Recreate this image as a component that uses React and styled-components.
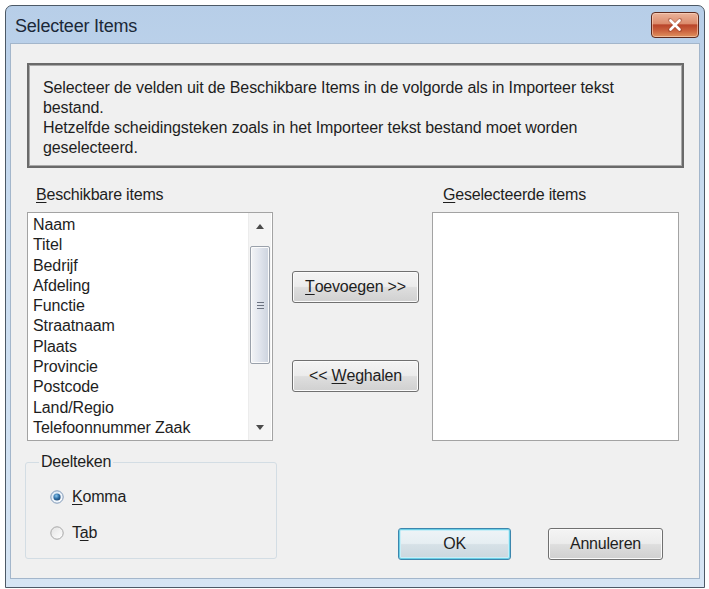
import React from 'react';
import styled, { createGlobalStyle } from 'styled-components';

const GlobalStyle = createGlobalStyle`
  html, body {
    margin: 0;
    padding: 0;
    background: #ffffff;
  }

  body {
    font-family: "Liberation Sans", Arial, sans-serif;
    color: #1e1e1e;
  }
`;

const AVAILABLE_ITEMS = [
    'Naam',
    'Titel',
    'Bedrijf',
    'Afdeling',
    'Functie',
    'Straatnaam',
    'Plaats',
    'Provincie',
    'Postcode',
    'Land/Regio',
    'Telefoonnummer Zaak',
];

const Window = styled.div`
  margin: 5px 0 0 5px;
  width: 700px;
  height: 583px;
  box-sizing: border-box;
  border: 1px solid #4c5966;
  border-radius: 7px 7px 0 0;
  background: linear-gradient(180deg, #b7cee8 0%, #c9dcf0 35%, #d6e5f4 100%);
  padding: 0 4px 8px 4px;
  display: flex;
  flex-direction: column;
`;

const TitleBar = styled.div`
  height: 37px;
  display: flex;
  align-items: center;
  padding-left: 5px;
  padding-right: 1px;
  flex-shrink: 0;
`;

const TitleText = styled.span`
  padding-top: 4px;
  font-size: 18px;
  color: #1b2838;
  letter-spacing: -0.2px;
`;

const CloseButton = styled.div`
  margin-left: auto;
  width: 48px;
  height: 26px;
  box-sizing: border-box;
  border: 1px solid #5e2b1f;
  border-radius: 4px;
  background: linear-gradient(
    180deg,
    #eab39b 0%,
    #dc8c6d 44%,
    #b9452a 50%,
    #cc6440 75%,
    #e0925f 100%
  );
  box-shadow: inset 0 0 0 1px rgba(255, 220, 200, 0.55);
  display: flex;
  align-items: center;
  justify-content: center;
`;

const Client = styled.div`
  flex: 1;
  background: #f0f0f0;
  border: 1px solid #a3b6cb;
  padding: 19px 15px 0 16px;
  display: flex;
  flex-direction: column;
`;

const DescBox = styled.div`
  height: 105px;
  box-sizing: border-box;
  border: 2px solid #6a6a6a;
  box-shadow: inset 0 0 0 1px #a9a9a9;
  padding: 13px 10px 0 14px;
  font-size: 16px;
  line-height: 20px;
  letter-spacing: -0.1px;
`;

const MainRow = styled.div`
  display: flex;
  margin-top: 17px;
`;

const ListColumn = styled.div`
  width: ${(props) => props.$width}px;
  margin-left: ${(props) => props.$offset || 0}px;
  display: flex;
  flex-direction: column;
`;

const FieldLabel = styled.div`
  font-size: 16px;
  line-height: 20px;
  padding-left: ${(props) => props.$indent}px;
  margin-bottom: 7px;
  letter-spacing: -0.2px;
`;

const Mnemonic = styled.span`
  text-decoration: underline;
  text-underline-offset: 2px;
`;

const ListBox = styled.div`
  height: 229px;
  box-sizing: border-box;
  border: 1px solid #a3a3a3;
  background: #ffffff;
  display: flex;
`;

const ItemList = styled.div`
  flex: 1;
  padding: 2px 0 0 5px;
  overflow: hidden;
`;

const Item = styled.div`
  font-size: 16px;
  line-height: 20.3px;
  white-space: nowrap;
  letter-spacing: -0.1px;
`;

const ScrollBar = styled.div`
  width: 22px;
  margin-right: 1px;
  background: #f4f4f4;
  border-left: 1px solid #ececec;
  display: flex;
  flex-direction: column;
`;

const ScrollArrow = styled.div`
  height: 26px;
  display: flex;
  align-items: center;
  justify-content: center;
  flex-shrink: 0;
`;

const ScrollTrack = styled.div`
  flex: 1;
  padding: 0 1px;
`;

const ScrollThumb = styled.div`
  height: 118px;
  box-sizing: border-box;
  border: 1px solid #9aa1ab;
  border-radius: 2px;
  background: linear-gradient(90deg, #f3f4f6 0%, #e2e6ee 45%, #ccd3de 100%);
  box-shadow: inset 0 0 0 1px #fbfbfb;
  display: flex;
  flex-direction: column;
  align-items: center;
  justify-content: center;
  gap: 2px;
`;

const GripLine = styled.div`
  width: 7px;
  height: 1px;
  background: #6b7280;
`;

const MoveColumn = styled.div`
  width: 127px;
  margin-left: 19px;
  padding-top: 86px;
  display: flex;
  flex-direction: column;
  gap: 57px;
`;

const PushButton = styled.div`
  width: ${(props) => props.$width}px;
  height: 32px;
  box-sizing: border-box;
  border: 1px solid ${(props) => (props.$default ? '#3c86ad' : '#707070')};
  border-radius: 3px;
  background: ${(props) =>
    props.$default
      ? 'linear-gradient(180deg, #eef4f7 0%, #e6eef2 48%, #d6e1e7 52%, #cbd7de 100%)'
      : 'linear-gradient(180deg, #f4f4f4 0%, #ececec 48%, #dedede 52%, #d0d0d0 100%)'};
  box-shadow: ${(props) =>
    props.$default ? 'inset 0 0 0 1px #6ccfe6, inset 0 0 0 2px #c9eef7' : 'inset 0 0 0 1px #fbfbfb'};
  display: flex;
  align-items: center;
  justify-content: center;
  font-size: 16px;
  letter-spacing: -0.2px;
  color: #1e1e1e;
`;

const BottomRow = styled.div`
  display: flex;
  align-items: flex-end;
  margin-top: 11px;
  margin-left: -2px;
`;

const GroupBox = styled.fieldset`
  width: 252px;
  height: 107px;
  box-sizing: border-box;
  margin: 0;
  padding: 0 0 0 13px;
  border: 1px solid #d3dde4;
  border-radius: 3px;
  min-inline-size: 0;
`;

const GroupLegend = styled.legend`
  padding: 0 2px;
  font-size: 16px;
  line-height: 20px;
  letter-spacing: -0.2px;
`;

const RadioList = styled.div`
  display: flex;
  flex-direction: column;
  gap: 16px;
  padding: 15px 0 0 11px;
`;

const RadioRow = styled.div`
  display: flex;
  align-items: center;
  gap: 8px;
  height: 20px;
  font-size: 16px;
  letter-spacing: -0.2px;
`;

const DialogButtons = styled.div`
  margin-left: auto;
  margin-right: 21px;
  margin-bottom: -1px;
  display: flex;
  gap: 37px;
`;

const CloseGlyph = () => (
    <svg width="16" height="14" viewBox="0 0 16 14" aria-hidden="true">
        <path d="M3 2 L13 12 M13 2 L3 12" stroke="#7a2a18" strokeWidth="4" strokeLinecap="round" opacity="0.35" />
        <path d="M3.5 2.5 L12.5 11.5 M12.5 2.5 L3.5 11.5" stroke="#ffffff" strokeWidth="2.6" strokeLinecap="round" />
    </svg>
);

const Arrow = ({ up }) => (
    <svg width="8" height="5" viewBox="0 0 8 5" aria-hidden="true">
        <path d={up ? 'M0 5 L4 0 L8 5 Z' : 'M0 0 L4 5 L8 0 Z'} fill="#4a4a4a" />
    </svg>
);

const RadioMark = ({ checked }) => (
    <svg width="14" height="14" viewBox="0 0 14 14" aria-hidden="true">
        <defs>
            <linearGradient id={checked ? 'rOn' : 'rOff'} x1="0" y1="0" x2="1" y2="1">
                <stop offset="0" stopColor={checked ? '#d7e6f5' : '#e2e2e2'} />
                <stop offset="1" stopColor="#ffffff" />
            </linearGradient>
            <radialGradient id="rDot" cx="0.4" cy="0.35" r="0.7">
                <stop offset="0" stopColor="#8cc8f0" />
                <stop offset="0.55" stopColor="#2f6fa6" />
                <stop offset="1" stopColor="#1b4470" />
            </radialGradient>
        </defs>
        <circle cx="7" cy="7" r="6.2" fill={`url(#${checked ? 'rOn' : 'rOff'})`} stroke={checked ? '#7f99b8' : '#a6a6a6'} strokeWidth="1" />
        {checked && <circle cx="7" cy="7" r="3.6" fill="url(#rDot)" />}
    </svg>
);

const AvailableList = () => (
    <ListBox>
        <ItemList>
            {AVAILABLE_ITEMS.map((item) => (
                <Item key={item}>{item}</Item>
            ))}
        </ItemList>
        <ScrollBar>
            <ScrollArrow>
                <Arrow up />
            </ScrollArrow>
            <ScrollTrack>
                <ScrollThumb style={{ marginTop: 7 }}>
                    <GripLine />
                    <GripLine />
                    <GripLine />
                </ScrollThumb>
            </ScrollTrack>
            <ScrollArrow>
                <Arrow />
            </ScrollArrow>
        </ScrollBar>
    </ListBox>
);

const App = () => {
    return (
        <>
            <GlobalStyle />
            <Window>
                <TitleBar>
                    <TitleText>Selecteer Items</TitleText>
                    <CloseButton>
                        <CloseGlyph />
                    </CloseButton>
                </TitleBar>
                <Client>
                    <DescBox>
                        Selecteer de velden uit de Beschikbare Items in de volgorde als in Importeer tekst
                        <br />
                        bestand.
                        <br />
                        Hetzelfde scheidingsteken zoals in het Importeer tekst bestand moet worden
                        <br />
                        geselecteerd.
                    </DescBox>
                    <MainRow>
                        <ListColumn $width={246}>
                            <FieldLabel $indent={9}>
                                <Mnemonic>B</Mnemonic>eschikbare items
                            </FieldLabel>
                            <AvailableList />
                        </ListColumn>
                        <MoveColumn>
                            <PushButton $width={127}>
                                <Mnemonic>T</Mnemonic>oevoegen &gt;&gt;
                            </PushButton>
                            <PushButton $width={127}>
                                &lt;&lt;&nbsp;<Mnemonic>W</Mnemonic>eghalen
                            </PushButton>
                        </MoveColumn>
                        <ListColumn $width={247} $offset={13}>
                            <FieldLabel $indent={11}>
                                <Mnemonic>G</Mnemonic>eselecteerde items
                            </FieldLabel>
                            <ListBox />
                        </ListColumn>
                    </MainRow>
                    <BottomRow>
                        <GroupBox>
                            <GroupLegend>Deelteken</GroupLegend>
                            <RadioList>
                                <RadioRow>
                                    <RadioMark checked />
                                    <span>
                                        <Mnemonic>K</Mnemonic>omma
                                    </span>
                                </RadioRow>
                                <RadioRow>
                                    <RadioMark />
                                    <span>
                                        T<Mnemonic>a</Mnemonic>b
                                    </span>
                                </RadioRow>
                            </RadioList>
                        </GroupBox>
                        <DialogButtons>
                            <PushButton $width={113} $default>
                                OK
                            </PushButton>
                            <PushButton $width={115}>Annuleren</PushButton>
                        </DialogButtons>
                    </BottomRow>
                </Client>
            </Window>
        </>
    );
};

export default App;
